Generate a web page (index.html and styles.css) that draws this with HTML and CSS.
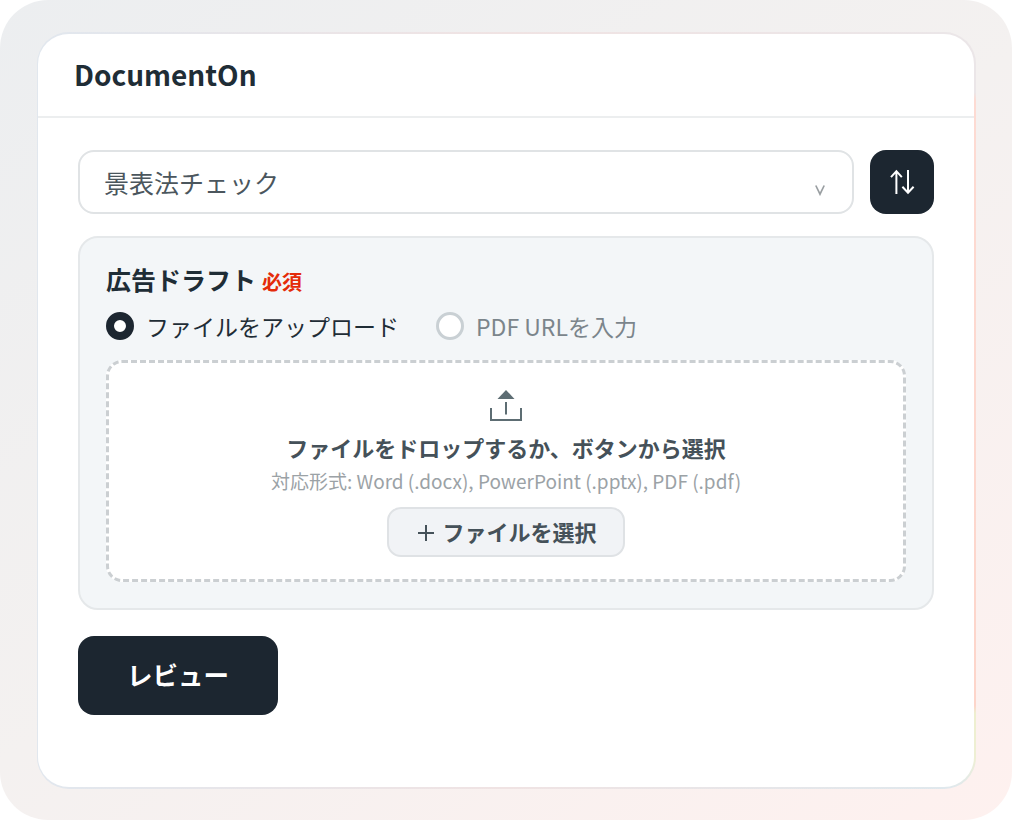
FILE: index.html
```html
<!DOCTYPE html>
<html lang="ja">
<head>
<meta charset="utf-8">
<title>DocumentOn</title>
<link rel="stylesheet" href="styles.css">
</head>
<body>
<main class="stage">
  <section class="card">
    <header class="card-header"><h1 class="brand">DocumentOn</h1></header>
    <div class="card-body">
      <div class="toolbar">
        <div class="select">
          <span class="select-value">景表法チェック</span>
          <svg class="chevron" width="12" height="12" viewBox="0 0 12 12"><path d="M1.800 1.500 6 10.200 10.200 1.500"/></svg>
        </div>
        <button class="sort" aria-label="sort">
          <svg width="28" height="28" viewBox="0 0 28 28"><path d="M8.400 26V3.200M3 9.200l5.400-6 5.400 6M20 2v22.800M14.400 18.800l5.600 6 5.600-6"/></svg>
        </button>
      </div>
      <div class="panel">
        <div class="field-label"><span class="field-name">広告ドラフト</span><span class="required">必須</span></div>
        <div class="radios">
          <label class="radio"><span class="dot dot-on"></span><span>ファイルをアップロード</span></label>
          <label class="radio radio-muted"><span class="dot"></span><span>PDF URLを入力</span></label>
        </div>
        <div class="dropzone">
          <svg class="upload" width="34" height="32" viewBox="0 0 34 32"><path class="upload-head" d="M17 0 25.500 9H8.500z"/><path class="upload-line" d="M17 12v12.500M2 18v12h30V18"/></svg>
          <div class="drop-title">ファイルをドロップするか、ボタンから選択</div>
          <div class="drop-hint">対応形式: Word (.docx), PowerPoint (.pptx), PDF (.pdf)</div>
          <button class="pick">
            <svg width="16" height="16" viewBox="0 0 16 16"><path d="M8 0v16M0 8h16"/></svg>
            <span>ファイルを選択</span>
          </button>
        </div>
      </div>
      <button class="submit">レビュー</button>
    </div>
  </section>
</main>
</body>
</html>
```
FILE: styles.css
```css
* { box-sizing: border-box; }

body {
  margin: 0;
  background: #fff;
  color: #1f2d36;
  font-family: "Noto Sans CJK JP", sans-serif;
}

button { font-family: inherit; margin: 0; padding: 0; }
svg { display: block; fill: none; }

.stage {
  width: 1012px;
  height: 820px;
  padding: 32px 36px 31px 37px;
  border-radius: 48px;
  background: linear-gradient(145deg, #eceef0 0%, #f4f1f0 50%, #fef1ef 100%);
}

.card {
  height: 757px;
  border: 2px solid transparent;
  border-left-width: 1px;
  border-radius: 32px;
  background:
    linear-gradient(#fff, #fff) padding-box,
    linear-gradient(90deg, #e1e7ee 0%, #f0e3e3 50%, transparent 97%) border-box,
    linear-gradient(180deg, #ebe6e8 0%, #ebe6e8 8%, #fddbd3 9%, #fdd5ca 89%, #eeefcf 90%, #eeefd4 96%, #dfe8ee 100%) border-box;
}

.card-header {
  height: 84px;
  padding: 0 36px;
  display: flex;
  align-items: center;
  border-bottom: 2px solid #eceeef;
}

.brand {
  margin: -2px 0 0;
  font-size: 28px;
  line-height: 40px;
  font-weight: 700;
}

.card-body { padding: 32px 40px 0; }

.toolbar { display: flex; gap: 16px; }

.select {
  flex: 1;
  height: 64px;
  padding: 0 26px 0 24px;
  display: flex;
  align-items: center;
  justify-content: space-between;
  border: 2px solid #e0e3e5;
  border-radius: 16px;
}

.select-value { color: #4b565d; font-size: 25px; }
.chevron { margin-top: 16px; stroke: #9a9fa2; stroke-width: 1.7; }

.sort {
  width: 64px;
  height: 64px;
  display: grid;
  place-items: center;
  border: 0;
  border-radius: 16px;
  background: #1c2630;
}

.sort svg { stroke: #fff; stroke-width: 2; }

.panel {
  height: 374px;
  margin-top: 22px;
  padding: 24px 26px 0;
  border: 2px solid #e5e8ea;
  border-radius: 20px;
  background: #f3f6f8;
}

.field-label { display: flex; height: 34px; align-items: baseline; gap: 6px; line-height: 34px; }
.field-name { font-size: 25px; font-weight: 700; }
.required { color: #e42b09; font-size: 20px; font-weight: 700; }

.radios { display: flex; height: 28px; margin-top: 16px; gap: 37px; align-items: center; }
.radio { display: flex; align-items: center; gap: 12px; font-size: 23px; line-height: 28px; }
.radio-muted { color: #7b858b; }
.dot { width: 28px; height: 28px; border: 3px solid #c9d0d4; border-radius: 50%; background: #fff; }
.dot-on { border: 8px solid #1c2630; }

.dropzone {
  height: 222px;
  margin-top: 20px;
  padding-top: 27px;
  display: flex;
  flex-direction: column;
  align-items: center;
  border: 3px dashed #cbcfd2;
  border-radius: 16px;
  background: #fff;
}

.upload-head { fill: #5d6d73; }
.upload-line { stroke: #5d6d73; stroke-width: 2; }
.drop-title { margin-top: 9px; color: #455159; font-size: 22px; font-weight: 700; line-height: 32px; }
.drop-hint { margin-top: 4px; color: #9ba2a6; font-size: 19px; line-height: 28px; }

.pick {
  width: 238px;
  height: 50px;
  margin-top: 12px;
  padding: 0 0 2px 3px;
  display: flex;
  align-items: center;
  justify-content: center;
  gap: 8px;
  border: 2px solid #dfe2e5;
  border-radius: 14px;
  background: #f1f3f6;
  color: #455159;
  font-size: 22px;
  font-weight: 700;
}

.pick svg { margin-top: 3px; stroke: #455159; stroke-width: 2; }

.submit {
  width: 200px;
  height: 79px;
  margin-top: 26px;
  padding-bottom: 5px;
  display: block;
  border: 0;
  border-radius: 16px;
  background: #1c2630;
  color: #fff;
  font-size: 25.5px;
  font-weight: 700;
}
```
